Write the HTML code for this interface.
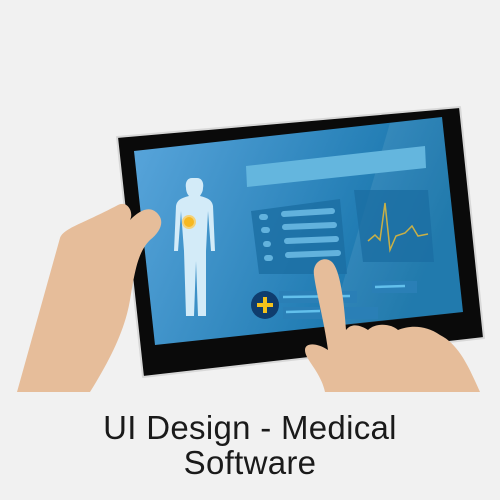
<!DOCTYPE html>
<html><head><style>
body{margin:0;background:#f1f1f1;width:500px;height:500px;overflow:hidden}
.t{position:absolute;left:0;width:500px;text-align:center;font-family:"Liberation Sans",sans-serif;font-size:33px;color:#1a1a1a;line-height:36px;letter-spacing:0.3px}
</style></head><body>
<svg width="500" height="500" style="position:absolute;left:0;top:0">
<defs>
<linearGradient id="g" x1="0" y1="0" x2="1" y2="0.3">
<stop offset="0" stop-color="#5aa6dc"/><stop offset="1" stop-color="#0f6fa6"/></linearGradient>
</defs>
<polygon points="117,137 460,107 484,338 143,377" fill="#0a0a0a" stroke="#d8d8d8" stroke-width="2" stroke-linejoin="round"/>
<polygon points="134,151 442,117 463,312 155,345" fill="url(#g)"/>
<polygon points="390,123 442,117 463,312 330,327" fill="#fff" opacity="0.08"/>
<polygon points="246,166 425,146 426,168 247,187" fill="#64b6de"/>
<polygon points="251,211 340,199 347,274 259,274" fill="#1c6ea3" opacity="0.8"/>
<g stroke="#62b2dd" stroke-width="6" stroke-linecap="round">
<line x1="262" y1="217" x2="265" y2="217"/><line x1="284" y1="214" x2="332" y2="211"/>
<line x1="264" y1="230" x2="267" y2="230"/><line x1="285" y1="227" x2="334" y2="225"/>
<line x1="266" y1="244" x2="268" y2="244"/><line x1="287" y1="241" x2="336" y2="239"/>
<line x1="267" y1="258" x2="270" y2="258"/><line x1="288" y1="255" x2="338" y2="253"/>
</g>
<polygon points="354,190 428,190 434,262 363,262" fill="#1c6ea3" opacity="0.8"/>
<path d="M368,241 L375,235 L380,240 L385,203 L390,250 L396,236 L405,233 L412,226 L418,236 L428,234" fill="none" stroke="#c9b046" stroke-width="1.5"/>
<circle cx="265" cy="305" r="14" fill="#0f3d6e"/>
<path d="M257,305h16M265,297v16" stroke="#f4c21c" stroke-width="4"/>
<g fill="#2a7fb6"><rect x="279" y="291" width="78" height="12"/><rect x="283" y="307" width="95" height="12"/><rect x="372" y="281" width="45" height="12"/></g>
<g stroke="#62c0ec" stroke-width="2.5"><line x1="283" y1="297" x2="350" y2="296"/><line x1="286" y1="312" x2="320" y2="311"/><line x1="375" y1="287" x2="405" y2="286"/></g>
<path d="M192,178c-5,0-7,5-6,10c0,4,2,7,3,8c-8,2-12,4-13,10l-2,45h4l3-40l3,40l2,65h8l2-55l2,55h8l0-65l2-40l3,40h4l-2-45c-1-6-5-8-13-10c1-2,3-4,3-8c1-5-1-10-6-10z" fill="#d3ebf8"/>
<circle cx="189" cy="222" r="6" fill="#f6b820" stroke="#f4d27a" stroke-width="2"/>
<path d="M17,392 L60,238 C64,228 80,225 118,205 C128,200 134,213 130,220 C140,210 150,205 158,214 C165,222 160,232 150,240 C138,252 135,270 130,300 C125,330 110,360 90,392 Z" fill="#e6bd9a"/>
<path d="M325,392 C320,370 305,360 305,350 C305,342 318,343 328,350 C324,320 316,292 314,275 C312,262 324,255 332,262 C340,270 344,300 346,330 C352,322 362,326 368,330 C376,322 392,324 398,330 C410,325 426,325 440,335 C460,345 470,370 480,392 Z" fill="#e6bd9a"/>
</svg>
<div class="t" style="top:410px">UI Design - Medical</div>
<div class="t" style="top:445px">Software</div>
</body></html>
